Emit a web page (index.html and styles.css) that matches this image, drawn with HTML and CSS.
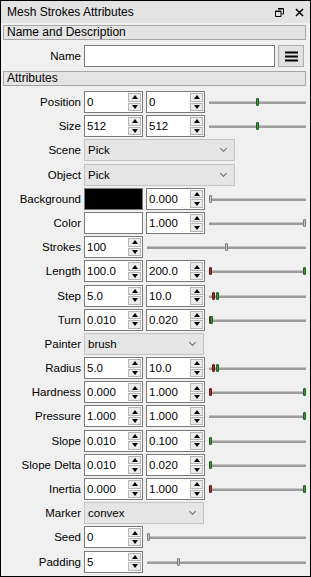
FILE: index.html
```html
<!DOCTYPE html>
<html lang="en">
<head>
    <meta charset="UTF-8">
    <title>Mesh Strokes Attributes</title>
    <link rel="stylesheet" href="styles.css">
</head>

<body>
    <div class="dock">
        <div class="titlebar">
            <span class="title">Mesh Strokes Attributes</span>
            <span class="tb-icons">
                <svg width="9" height="9" viewBox="0 0 9 9"><path d="M3 0.5h5.5v5.5h-2M0.5 3h5.5v5.5h-5.5z" fill="none" stroke="#000" stroke-width="1"/><path d="M3 1h5M0.5 3.5h5.5" stroke="#000" stroke-width="1"/></svg>
                <svg width="9" height="9" viewBox="0 0 9 9"><path d="M1 1l7 7M8 1l-7 7" stroke="#000" stroke-width="1.6"/></svg>
            </span>
        </div>

        <div class="content">
            <div class="group">Name and Description</div>
            <div class="name-row">
                <label class="lbl">Name</label>
                <div class="textbox"></div>
                <button class="menu-btn">
                    <svg width="13" height="11" viewBox="0 0 13 11"><path d="M0 1.5h13M0 5.5h13M0 9.5h13" stroke="#000" stroke-width="2"/></svg>
                </button>
            </div>

            <div class="group">Attributes</div>
            <div class="attrs">
                <label class="lbl">Position</label>
                <div class="spin"><span>0</span><i class="arrows"><b class="up"></b><b class="down"></b></i></div>
                <div class="spin"><span>0</span><i class="arrows"><b class="up"></b><b class="down"></b></i></div>
                <div class="slider"><b class="knob green" style="left: 48%"></b></div>

                <label class="lbl">Size</label>
                <div class="spin"><span>512</span><i class="arrows"><b class="up"></b><b class="down"></b></i></div>
                <div class="spin"><span>512</span><i class="arrows"><b class="up"></b><b class="down"></b></i></div>
                <div class="slider"><b class="knob green" style="left: 48%"></b></div>

                <label class="lbl">Scene</label>
                <div class="combo wide">Pick<i class="chev"></i></div>

                <label class="lbl">Object</label>
                <div class="combo wide">Pick<i class="chev"></i></div>

                <label class="lbl">Background</label>
                <div class="swatch black"></div>
                <div class="spin"><span>0.000</span><i class="arrows"><b class="up"></b><b class="down"></b></i></div>
                <div class="slider"><b class="knob grey" style="left: 0%"></b></div>

                <label class="lbl">Color</label>
                <div class="swatch white"></div>
                <div class="spin"><span>1.000</span><i class="arrows"><b class="up"></b><b class="down"></b></i></div>
                <div class="slider"><b class="knob grey" style="left: 97%"></b></div>

                <label class="lbl">Strokes</label>
                <div class="spin"><span>100</span><i class="arrows"><b class="up"></b><b class="down"></b></i></div>
                <div class="slider long"><b class="knob grey" style="left: 49%"></b></div>

                <label class="lbl">Length</label>
                <div class="spin"><span>100.0</span><i class="arrows"><b class="up"></b><b class="down"></b></i></div>
                <div class="spin"><span>200.0</span><i class="arrows"><b class="up"></b><b class="down"></b></i></div>
                <div class="slider"><b class="knob red" style="left: 0%"></b><b class="knob green" style="left: 97%"></b></div>

                <label class="lbl">Step</label>
                <div class="spin"><span>5.0</span><i class="arrows"><b class="up"></b><b class="down"></b></i></div>
                <div class="spin"><span>10.0</span><i class="arrows"><b class="up"></b><b class="down"></b></i></div>
                <div class="slider"><b class="knob red" style="left: 3%"></b><b class="knob green" style="left: 7%"></b></div>

                <label class="lbl">Turn</label>
                <div class="spin"><span>0.010</span><i class="arrows"><b class="up"></b><b class="down"></b></i></div>
                <div class="spin"><span>0.020</span><i class="arrows"><b class="up"></b><b class="down"></b></i></div>
                <div class="slider"><b class="knob red" style="left: 0%"></b><b class="knob green" style="left: 1%"></b></div>

                <label class="lbl">Painter</label>
                <div class="combo narrow">brush<i class="chev"></i></div>

                <label class="lbl">Radius</label>
                <div class="spin"><span>5.0</span><i class="arrows"><b class="up"></b><b class="down"></b></i></div>
                <div class="spin"><span>10.0</span><i class="arrows"><b class="up"></b><b class="down"></b></i></div>
                <div class="slider"><b class="knob red" style="left: 3%"></b><b class="knob green" style="left: 7%"></b></div>

                <label class="lbl">Hardness</label>
                <div class="spin"><span>0.000</span><i class="arrows"><b class="up"></b><b class="down"></b></i></div>
                <div class="spin"><span>1.000</span><i class="arrows"><b class="up"></b><b class="down"></b></i></div>
                <div class="slider"><b class="knob red" style="left: 0%"></b><b class="knob green" style="left: 97%"></b></div>

                <label class="lbl">Pressure</label>
                <div class="spin"><span>1.000</span><i class="arrows"><b class="up"></b><b class="down"></b></i></div>
                <div class="spin"><span>1.000</span><i class="arrows"><b class="up"></b><b class="down"></b></i></div>
                <div class="slider"><b class="knob green" style="left: 97%"></b></div>

                <label class="lbl">Slope</label>
                <div class="spin"><span>0.010</span><i class="arrows"><b class="up"></b><b class="down"></b></i></div>
                <div class="spin"><span>0.100</span><i class="arrows"><b class="up"></b><b class="down"></b></i></div>
                <div class="slider"><b class="knob green" style="left: 0%"></b></div>

                <label class="lbl">Slope Delta</label>
                <div class="spin"><span>0.010</span><i class="arrows"><b class="up"></b><b class="down"></b></i></div>
                <div class="spin"><span>0.020</span><i class="arrows"><b class="up"></b><b class="down"></b></i></div>
                <div class="slider"><b class="knob green" style="left: 0%"></b></div>

                <label class="lbl">Inertia</label>
                <div class="spin"><span>0.000</span><i class="arrows"><b class="up"></b><b class="down"></b></i></div>
                <div class="spin"><span>1.000</span><i class="arrows"><b class="up"></b><b class="down"></b></i></div>
                <div class="slider"><b class="knob red" style="left: 0%"></b><b class="knob green" style="left: 97%"></b></div>

                <label class="lbl">Marker</label>
                <div class="combo narrow">convex<i class="chev"></i></div>

                <label class="lbl">Seed</label>
                <div class="spin"><span>0</span><i class="arrows"><b class="up"></b><b class="down"></b></i></div>
                <div class="slider long"><b class="knob grey" style="left: 0%"></b></div>

                <label class="lbl">Padding</label>
                <div class="spin"><span>5</span><i class="arrows"><b class="up"></b><b class="down"></b></i></div>
                <div class="slider long"><b class="knob grey" style="left: 19%"></b></div>
            </div>
        </div>
    </div>
</body>
</html>
```

FILE: styles.css
```css
html, body {
    margin: 0;
    padding: 0;
    background-color: #f0f0f0;
}

body {
    font-family: 'Liberation Sans', Arial, sans-serif;
    font-size: 11.5px;
    color: #000;
}

.dock {
    width: 311px;
    height: 577px;
    box-sizing: border-box;
    border: 1px solid #000;
    background-color: #f0f0f0;
}

.titlebar {
    height: 22px;
    display: flex;
    align-items: center;
    padding-left: 6px;
    padding-right: 6px;
    background-color: #e3e3e3;
    font-size: 12px;
}

.tb-icons {
    margin-left: auto;
    display: flex;
    gap: 11px;
    align-items: center;
}

.content {
    padding: 2px 4px 0 2px;
}

.group {
    height: 13px;
    line-height: 13px;
    padding-left: 3px;
    border: 1px solid #a6a6a6;
    background-color: #e4e4e4;
    font-size: 12px;
}

.lbl {
    text-align: right;
    white-space: nowrap;
    align-self: center;
}

.name-row {
    display: grid;
    grid-template-columns: 78px 1fr 26px;
    column-gap: 3px;
    height: 22px;
    margin: 5px 2px 4px 0;
}

.textbox {
    border: 1px solid #7a7a7a;
    background-color: #fff;
}

.menu-btn {
    margin: 0;
    padding: 0;
    border: 1px solid #adadad;
    background-color: #e1e1e1;
    display: flex;
    align-items: center;
    justify-content: center;
}

.attrs {
    display: grid;
    grid-template-columns: 78px 59px 59px 1fr;
    grid-auto-rows: 22px;
    column-gap: 3px;
    row-gap: 2.2px;
    margin-top: 5px;
}

.attrs .lbl {
    grid-column: 1;
}

.spin {
    display: flex;
    align-items: center;
    box-sizing: border-box;
    border: 1px solid #7a7a7a;
    background-color: #fff;
    padding-left: 2px;
}

.arrows {
    margin-left: auto;
    margin-right: 1px;
    width: 13px;
    height: 18px;
    display: flex;
    flex-direction: column;
    gap: 1px;
}

.arrows b {
    flex: 1;
    box-sizing: border-box;
    border: 1px solid #b5b5b5;
    background-color: #ececec;
    display: flex;
    align-items: center;
    justify-content: center;
}

.arrows b::after {
    content: "";
    border-left: 3px solid transparent;
    border-right: 3px solid transparent;
}

.arrows .up::after {
    border-bottom: 4px solid #000;
}

.arrows .down::after {
    border-top: 4px solid #000;
}

.swatch {
    box-sizing: border-box;
    border: 1px solid #7a7a7a;
}

.swatch.black {
    background-color: #000;
}

.swatch.white {
    background-color: #fff;
}

.combo {
    grid-column: 2 / -1;
    box-sizing: border-box;
    border: 1px solid #c3c3c3;
    background-color: #e5e5e5;
    display: flex;
    align-items: center;
    padding-left: 3px;
    padding-right: 8px;
}

.combo.wide {
    width: 151px;
}

.combo.narrow {
    width: 120px;
}

.chev {
    margin-left: auto;
    width: 4px;
    height: 4px;
    border-right: 1px solid #6d6d6d;
    border-bottom: 1px solid #6d6d6d;
    transform: rotate(45deg);
    margin-top: -3px;
}

.slider {
    position: relative;
    margin-left: 1px;
}

.slider.long {
    grid-column: 3 / -1;
}

.slider::before {
    content: "";
    position: absolute;
    left: 0;
    right: 0;
    top: 10px;
    height: 3px;
    background-color: #9c9c9c;
    border-top: 1px solid #c4c4c4;
    box-sizing: border-box;
}

.knob {
    position: absolute;
    top: 7px;
    width: 3px;
    height: 8px;
    border-radius: 1px;
    box-sizing: border-box;
}

.knob.green {
    background-color: #2f9c2f;
    border: 1px solid #245b24;
}

.knob.red {
    background-color: #b02828;
    border: 1px solid #6a1a1a;
}

.knob.grey {
    background-color: #c8c8c8;
    border: 1px solid #7c7c7c;
}
```
